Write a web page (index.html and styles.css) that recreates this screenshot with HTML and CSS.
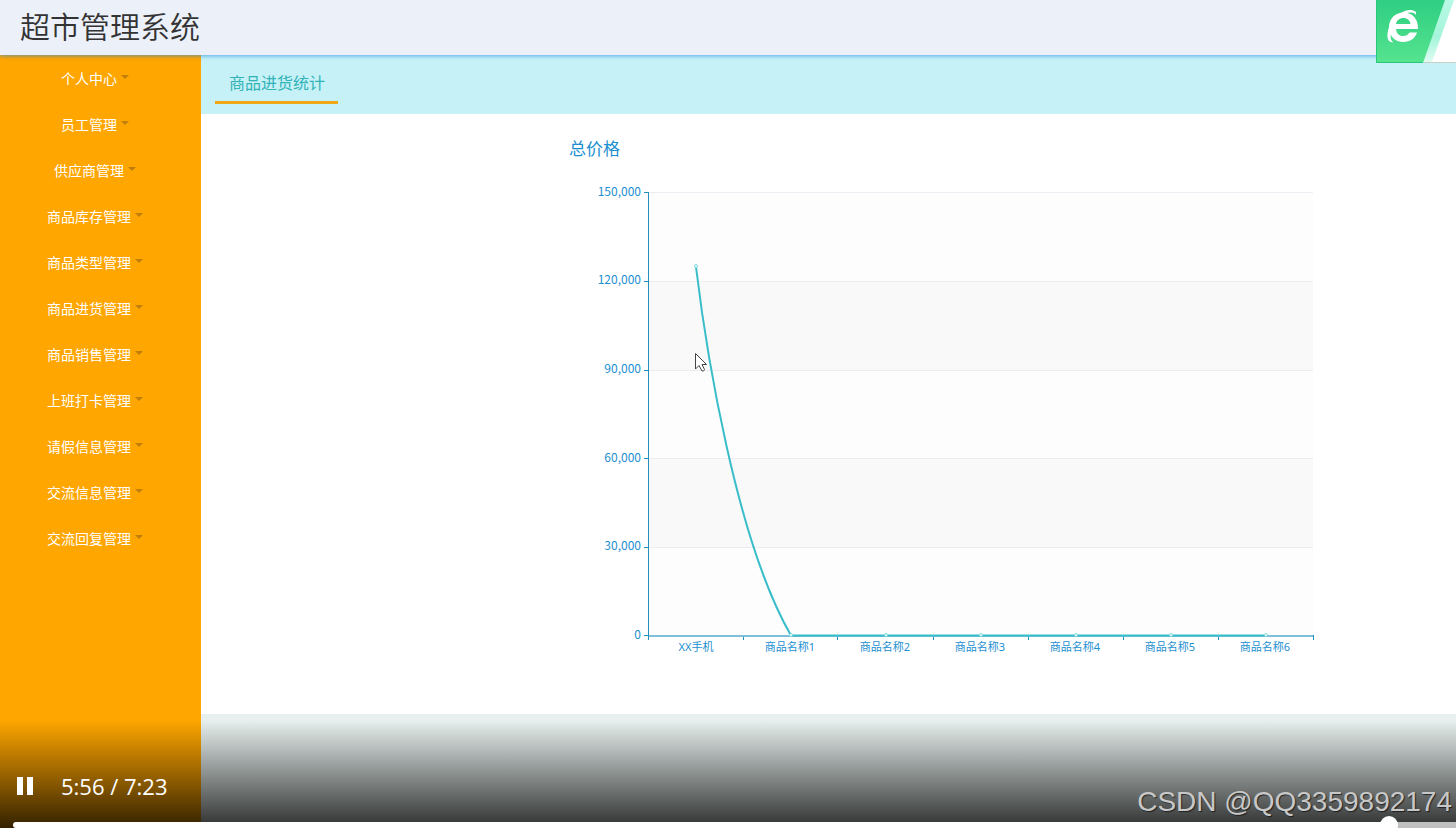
FILE: index.html
```
<!DOCTYPE html>
<html lang="zh-CN">
<head>
<meta charset="utf-8">
<meta name="viewport" content="width=device-width, initial-scale=1">
<title>超市管理系统</title>
<link rel="stylesheet" href="styles.css">
</head>
<body>
<header class="topbar">
  <h1 class="brand">超市管理系统</h1>
</header>
<div class="layout">
  <nav class="sidebar" aria-label="主菜单">
    <ul class="menu">
      <li><button type="button" class="menu-item">个人中心<span class="caret"></span></button></li>
      <li><button type="button" class="menu-item">员工管理<span class="caret"></span></button></li>
      <li><button type="button" class="menu-item">供应商管理<span class="caret"></span></button></li>
      <li><button type="button" class="menu-item">商品库存管理<span class="caret"></span></button></li>
      <li><button type="button" class="menu-item">商品类型管理<span class="caret"></span></button></li>
      <li><button type="button" class="menu-item">商品进货管理<span class="caret"></span></button></li>
      <li><button type="button" class="menu-item">商品销售管理<span class="caret"></span></button></li>
      <li><button type="button" class="menu-item">上班打卡管理<span class="caret"></span></button></li>
      <li><button type="button" class="menu-item">请假信息管理<span class="caret"></span></button></li>
      <li><button type="button" class="menu-item">交流信息管理<span class="caret"></span></button></li>
      <li><button type="button" class="menu-item">交流回复管理<span class="caret"></span></button></li>
    </ul>
  </nav>
  <main class="content">
    <div class="tabs"><a class="tab" href="#stats">商品进货统计</a></div>
    <section class="panel" id="stats">
      <svg class="chart" viewBox="0 0 760 540" role="img" aria-label="总价格">
        <text class="chart-title" x="9" y="25">总价格</text>
        <g class="band-light">
          <rect x="89" y="62" width="664" height="89"/>
          <rect x="89" y="240" width="664" height="88"/>
          <rect x="89" y="417" width="664" height="88"/>
        </g>
        <g class="band-dark">
          <rect x="89" y="151" width="664" height="89"/>
          <rect x="89" y="328" width="664" height="89"/>
        </g>
        <path class="grid" d="M89 62.5H753M89 151.5H753M89 240.5H753M89 328.5H753M89 417.5H753"/>
        <path class="axis" d="M88.5 62V510M84 62.5H88M84 151.5H88M84 240.5H88M84 328.5H88M84 417.5H88M84 505.5H88M183.5 506V510M277.5 506V510M373.5 506V510M468.5 506V510M563.5 506V510M658.5 506V510M753.5 505V510"/>
        <path class="baseline" d="M89 506H753"/>
        <g class="y-label">
          <text x="81" y="66">150,000</text>
          <text x="81" y="154">120,000</text>
          <text x="81" y="243">90,000</text>
          <text x="81" y="332">60,000</text>
          <text x="81" y="420">30,000</text>
          <text x="81" y="509">0</text>
        </g>
        <g class="x-label">
          <text x="136" y="521">XX手机</text>
          <text x="230" y="521">商品名称1</text>
          <text x="325" y="521">商品名称2</text>
          <text x="420" y="521">商品名称3</text>
          <text x="515" y="521">商品名称4</text>
          <text x="610" y="521">商品名称5</text>
          <text x="705" y="521">商品名称6</text>
        </g>
        <path class="series" d="M136 137C146 220 176 410 231 505.500H706"/>
        <g class="marker">
          <circle cx="136" cy="136" r="1.500"/>
          <circle cx="231" cy="505" r="1.500"/>
          <circle cx="326" cy="505" r="1.500"/>
          <circle cx="421" cy="505" r="1.500"/>
          <circle cx="516" cy="505" r="1.500"/>
          <circle cx="611" cy="505" r="1.500"/>
          <circle cx="706" cy="505" r="1.500"/>
        </g>
        <path class="pointer" d="M135.500 223.500V239L139 235.500L142 241Q144 241.500 144.500 239.500L142 234.500H146.500Z"/>
      </svg>
    </section>
  </main>
</div>

<svg class="browser-badge" viewBox="0 0 80 63" aria-hidden="true">
  <defs>
    <linearGradient id="green" x1="0" y1="0" x2="0" y2="1">
      <stop offset="0" stop-color="#2fce82"/>
      <stop offset="1" stop-color="#56e48f"/>
    </linearGradient>
    <linearGradient id="mint" x1="0" y1="0" x2="0" y2="1">
      <stop offset="0" stop-color="#b8f9e6"/>
      <stop offset="0.600" stop-color="#a5f5da"/>
      <stop offset="1" stop-color="#e0fcf2"/>
    </linearGradient>
  </defs>
  <path fill="#fff" d="M60 0H80V62H40Z"/>
  <path fill="url(#mint)" d="M68 0H78L56 62H46Z"/>
  <path fill="url(#green)" d="M0 0H69L47 63H0Z"/>
  <path fill="none" stroke="#26c979" d="M.5 0V62.500H47"/>
  <path stroke="#c9cec8" d="M48 62.500H80"/>
  <path fill="#fff" fill-rule="evenodd" d="M42 29H20C20.500 33.500 23 36 27 36C30 36 32 35 33.500 32.500H41C39 38.500 34 42 27.500 42C19 42 13 36 13 27.500C13 19 19 12.500 27.500 12.500C36.500 12.500 42.500 19 42 29ZM20 24H34.500C34 20.500 31.500 18 27.500 18C23.500 18 20.500 20.500 20 24Z"/>
  <path fill="#fff" d="M25 13C30 9.500 36 9 39.500 11.500Q40.500 12.500 40 15C37.500 12 33 12 29 14ZM15 23C11.500 29 10.500 36 12.500 40.500Q14 42.500 17.500 42.500Q13.500 40 15 33Z"/>
</svg>

<footer class="player">
  <div class="controls">
    <button type="button" class="pause" aria-label="暂停">
      <svg viewBox="0 0 16 18" aria-hidden="true"><path d="M0 0H6V18H0ZM10 0H16V18H10Z"/></svg>
    </button>
    <span class="time">5:56 / 7:23</span>
    <span class="watermark">CSDN @QQ3359892174</span>
  </div>
  <input class="seek" type="range" min="0" max="1000" value="959" aria-label="播放进度">
</footer>
</body>
</html>
```
FILE: styles.css
```
* { box-sizing: border-box; }

body {
  margin: 0;
  height: 100vh;
  overflow: hidden;
  display: flex;
  flex-direction: column;
  position: relative;
  background: #e7f0ee;
  font-family: "Noto Sans", "Noto Sans CJK SC", sans-serif;
}

button { border: 0; padding: 0; background: none; font: inherit; color: inherit; }

.topbar {
  flex: none;
  height: 55px;
  padding: 0 20px;
  display: flex;
  align-items: flex-start;
  background: #ebf0f9;
  box-shadow: 0 1px 4px rgba(40, 140, 230, 0.7);
  z-index: 1;
}

.brand {
  margin: 0;
  font-family: "Noto Sans CJK SC", sans-serif;
  font-size: 30px;
  font-weight: 350;
  line-height: 50px;
  color: #333;
}

.layout { flex: 1; display: flex; min-height: 0; }

.sidebar { flex: none; width: 201px; background: #ffa600; }

.menu { list-style: none; margin: 0; padding: 0; }

.menu-item {
  display: flex;
  align-items: center;
  justify-content: center;
  gap: 4px;
  width: 100%;
  height: 46px;
  padding-right: 11px;
  color: #fff;
  font-size: 14px;
}

.caret {
  margin-bottom: 2px;
  border: 4px solid transparent;
  border-top-color: #c07f0c;
  border-bottom: 0;
}

.content { flex: 1; min-width: 0; }

.tabs { display: flex; padding: 10px 14px; background: #c6f1f6; }

.tab {
  padding: 0 13px 0 14px;
  border-bottom: 3px solid #f0a817;
  font-size: 16px;
  line-height: 36px;
  color: #31b3b8;
  text-decoration: none;
}

.panel { height: 600px; padding: 16px 0 0 359px; background: #fff; }

.chart { display: block; width: 760px; max-width: 100%; overflow: visible; font-size: 12px; }
.chart text { fill: #1c8fd0; }
.chart .chart-title { font-size: 17px; }
.chart .y-label { text-anchor: end; font-family: "Noto Sans CJK SC", sans-serif; }
.chart .x-label { text-anchor: middle; font-size: 11px; }
.band-light { fill: #fefdfe; }
.band-dark { fill: #f9f9f9; }
.grid { stroke: #eeecf2; }
.axis { stroke: #248fbe; }
.baseline { stroke: #80bfdc; stroke-width: 2; }
.series { fill: none; stroke: #39bdc9; stroke-width: 2; }
.marker { fill: #fff; stroke: #7bd9dc; }
.pointer { fill: #fff; stroke: #444; }

.browser-badge { position: absolute; top: 0; right: 0; width: 80px; z-index: 2; }

.player {
  position: absolute;
  left: 0;
  right: 0;
  bottom: 0;
  height: 108px;
  display: flex;
  flex-direction: column;
  justify-content: flex-end;
  background: linear-gradient(rgba(0, 0, 0, 0), rgba(0, 0, 0, 0.8));
  color: #fff;
  z-index: 3;
}

.controls { display: flex; align-items: center; padding: 0 4px 16px 17px; }
.pause { width: 16px; height: 18px; }
.pause svg { display: block; fill: #fff; }
.time { margin-left: 28px; font-family: "Open Sans", sans-serif; font-size: 22px; line-height: 40px; }

.watermark {
  align-self: flex-end;
  margin: 0 0 -14px auto;
  font-family: "Liberation Sans", sans-serif;
  font-size: 28px;
  line-height: 36px;
  color: #c8c8c8;
  text-shadow: 1px 1px 1px rgba(0, 0, 0, 0.6);
}

.seek {
  appearance: none;
  height: 6px;
  margin: 0 0 0 13px;
  border-radius: 3px 0 0 3px;
  background: linear-gradient(to right, #fff 95%, #bfbfbf 95%);
}

.seek::-webkit-slider-thumb {
  appearance: none;
  width: 18px;
  height: 18px;
  border-radius: 50%;
  background: #fff;
}
```
